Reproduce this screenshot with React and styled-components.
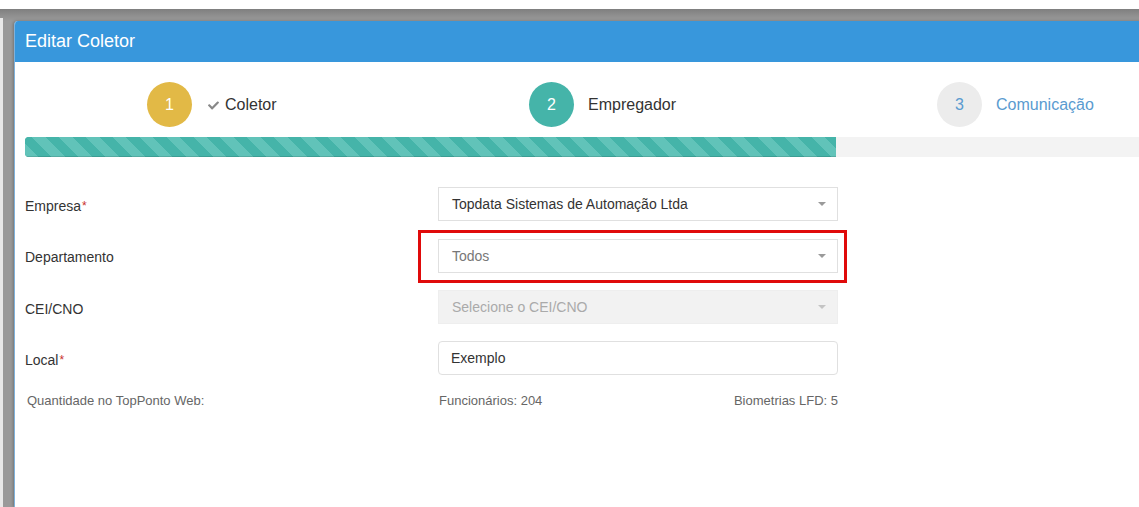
import React from "react";
import styled, { createGlobalStyle } from "styled-components";
import { FaCheck } from "react-icons/fa";

const GlobalStyle = createGlobalStyle`
  html, body {
    margin: 0;
    padding: 0;
    background: #fff;
    font-family: "Liberation Sans", Arial, sans-serif;
  }
  * {
    box-sizing: border-box;
  }
`;

const steps = [
  { number: 1, label: "Coletor", status: "done" },
  { number: 2, label: "Empregador", status: "active" },
  { number: 3, label: "Comunicação", status: "todo" },
];

function App() {
  return (
    <>
      <GlobalStyle />
      <Page>
        <TopGap />
        <Overlay>
          <BackPanel />
          <Modal>
            <ModalHeader>Editar Coletor</ModalHeader>
            <ModalBody>
              <Stepper>
                {steps.map((step) => (
                  <Step key={step.number}>
                    <StepCircle status={step.status}>{step.number}</StepCircle>
                    <StepLabel status={step.status}>
                      {step.status === "done" && (
                        <CheckIcon>
                          <FaCheck />
                        </CheckIcon>
                      )}
                      {step.label}
                    </StepLabel>
                  </Step>
                ))}
              </Stepper>

              <ProgressTrack>
                <ProgressFill style={{ width: 811 }} />
              </ProgressTrack>

              <Form>
                <Label>
                  Empresa<Required>*</Required>
                </Label>
                <Select>
                  <SelectText>Topdata Sistemas de Automação Ltda</SelectText>
                  <Caret />
                </Select>

                <Label>Departamento</Label>
                <Highlighted>
                  <Select>
                    <SelectText muted>Todos</SelectText>
                    <Caret />
                  </Select>
                  <RedMark />
                </Highlighted>

                <Label>CEI/CNO</Label>
                <Select disabled>
                  <SelectText placeholder>Selecione o CEI/CNO</SelectText>
                  <Caret light />
                </Select>

                <Label>
                  Local<Required>*</Required>
                </Label>
                <Input>Exemplo</Input>

                <InfoLabel>Quantidade no TopPonto Web:</InfoLabel>
                <InfoValues>
                  <span>Funcionários: 204</span>
                  <span>Biometrias LFD: 5</span>
                </InfoValues>
              </Form>
            </ModalBody>
          </Modal>
        </Overlay>
      </Page>
    </>
  );
}

export default App;

const Page = styled.div`
  display: flex;
  flex-direction: column;
  height: 100vh;
  overflow: hidden;
`;

const TopGap = styled.div`
  height: 9px;
  background: #fff;
  flex-shrink: 0;
`;

const Overlay = styled.div`
  flex: 1;
  display: flex;
  padding-top: 12px;
  background: linear-gradient(to bottom, #7f7f7f 0px, #8e8e8e 6px, #9a9a9a 12px, #9a9a9a 100%);
  min-height: 0;
`;

const BackPanel = styled.div`
  width: 3px;
  margin-top: -3px;
  margin-right: 11px;
  background: #e9e9e9;
  flex-shrink: 0;
`;

const Modal = styled.div`
  flex: 1;
  display: flex;
  flex-direction: column;
  min-width: 1140px;
  background: #fff;
  border-left: 1px solid #7fb2dc;
  border-top-left-radius: 4px;
  box-shadow: -1px 0 3px rgba(0, 0, 0, 0.25);
  overflow: hidden;
`;

const ModalHeader = styled.div`
  height: 41px;
  display: flex;
  align-items: center;
  padding-left: 10px;
  background: #3897dc;
  color: #fff;
  font-size: 18px;
  flex-shrink: 0;
`;

const ModalBody = styled.div`
  flex: 1;
  padding: 20px 0 0 10px;
`;

const Stepper = styled.div`
  display: grid;
  grid-template-columns: 382px 408px 1fr;
  padding-left: 122px;
  height: 45px;
`;

const Step = styled.div`
  display: flex;
  align-items: center;
  gap: 14px;
`;

const circleColors = {
  done: { bg: "#e2b946", fg: "#fff" },
  active: { bg: "#45b4a9", fg: "#fff" },
  todo: { bg: "#ececec", fg: "#5a9bd0" },
};

const StepCircle = styled.div`
  width: 45px;
  height: 45px;
  border-radius: 50%;
  display: flex;
  align-items: center;
  justify-content: center;
  font-size: 16px;
  background: ${({ status }) => circleColors[status].bg};
  color: ${({ status }) => circleColors[status].fg};
`;

const StepLabel = styled.div`
  display: flex;
  align-items: center;
  font-size: 16px;
  color: ${({ status }) => (status === "todo" ? "#5a9bd0" : "#333")};
`;

const CheckIcon = styled.span`
  display: flex;
  align-items: center;
  margin: 2px 6px 0 2px;
  color: #888;
  font-size: 11px;
`;

const ProgressTrack = styled.div`
  margin-top: 10px;
  height: 20px;
  background: #f3f3f3;
  border-radius: 4px 0 0 4px;
  overflow: hidden;
`;

const ProgressFill = styled.div`
  height: 100%;
  background-color: #45b4a9;
  background-image: repeating-linear-gradient(
    45deg,
    #61c3b9 0px,
    #61c3b9 9.5px,
    #45b4a9 9.5px,
    #45b4a9 19px
  );
  box-shadow: inset 0 -1px 0 rgba(0, 0, 0, 0.12);
`;

const Form = styled.div`
  margin-top: 30px;
  display: grid;
  grid-template-columns: 413px 400px;
  row-gap: 17px;
  align-items: center;
`;

const Label = styled.div`
  padding-top: 3px;
  font-size: 14px;
  color: #333;
`;

const Required = styled.span`
  color: #c9302c;
  font-size: 12px;
  margin-left: 1px;
  vertical-align: 1px;
`;

const Select = styled.div`
  height: 34px;
  display: flex;
  align-items: center;
  justify-content: space-between;
  padding: 0 11px 0 13px;
  border: 1px solid ${({ disabled }) => (disabled ? "#eeeeee" : "#e0e0e0")};
  background: ${({ disabled }) => (disabled ? "#f2f2f2" : "#fff")};
`;

const SelectText = styled.span`
  font-size: 14px;
  color: ${({ muted, placeholder }) =>
    placeholder ? "#aaa" : muted ? "#777" : "#333"};
`;

const Caret = styled.span`
  width: 0;
  height: 0;
  border-left: 4px solid transparent;
  border-right: 4px solid transparent;
  border-top: 4px solid ${({ light }) => (light ? "#c4c4c4" : "#9a9a9a")};
`;

const Highlighted = styled.div`
  position: relative;
  margin-top: 1px;
`;

const RedMark = styled.div`
  position: absolute;
  top: -9px;
  left: -20px;
  right: -9px;
  bottom: -10px;
  border: 3px solid #e00a0a;
  pointer-events: none;
`;

const Input = styled.div`
  height: 34px;
  display: flex;
  align-items: center;
  padding-left: 12px;
  border: 1px solid #e0e0e0;
  border-radius: 4px;
  font-size: 14px;
  color: #333;
`;

const InfoLabel = styled.div`
  margin-top: 1px;
  padding-left: 2px;
  font-size: 13px;
  color: #666;
`;

const InfoValues = styled.div`
  margin-top: 1px;
  display: flex;
  justify-content: space-between;
  padding-left: 1px;
  font-size: 13px;
  color: #666;
`;
